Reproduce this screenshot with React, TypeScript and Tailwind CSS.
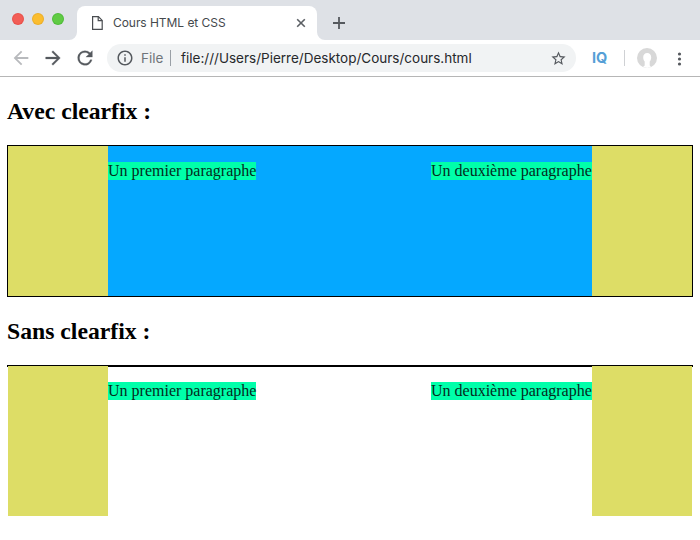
import React from "react";

function PageIcon() {
  return (
    <svg className="ml-[15px] h-[14px] w-[11px] shrink-0" viewBox="0 0 11 14" fill="none" stroke="#4a4d51" strokeWidth="1.2">
      <path d="M0.6 0.6H6.4L10.2 4.4V13.4H0.6Z" />
      <path d="M6.2 0.6V4.6H10.2" />
    </svg>
  );
}

function TabStrip() {
  return (
    <div className="flex h-10 items-end bg-[#dee1e6]">
      <div className="flex h-10 w-[69px] shrink-0 items-start gap-2 pl-3 pt-[13px]">
        <span className="size-3 rounded-full border border-[#e0443e]/50 bg-[#f25d56]" />
        <span className="size-3 rounded-full border border-[#dea123]/50 bg-[#fbbd2f]" />
        <span className="size-3 rounded-full border border-[#3eae2d]/50 bg-[#60cb44]" />
      </div>
      <svg className="size-2 shrink-0" viewBox="0 0 8 8" fill="#fff"><path d="M8 0A8 8 0 0 1 0 8H8Z" /></svg>
      <div className="flex h-[34px] w-[240px] shrink-0 items-center rounded-t-lg bg-white">
        <PageIcon />
        <span className="ml-[10px] w-[183px] whitespace-nowrap text-[12px] leading-4 tracking-[-0.05px] text-[#45494d]">Cours HTML et CSS</span>
        <svg className="size-[10px] shrink-0" viewBox="0 0 10 10" stroke="#5b5f64" strokeWidth="1.6"><path d="M1.2 1.2L8.8 8.8M8.800 1.200L1.200 8.800" /></svg>
      </div>
      <svg className="size-2 shrink-0" viewBox="0 0 8 8" fill="#fff"><path d="M0 0A8 8 0 0 0 8 8H0Z" /></svg>
      <svg className="mb-[11px] ml-2 size-3" viewBox="0 0 12 12" stroke="#55595e" strokeWidth="1.8"><path d="M6 0V12M0 6H12" /></svg>
    </div>
  );
}

function Toolbar() {
  return (
    <div className="flex h-[37px] items-center border-b border-[#b6b6b6] bg-white">
      <svg className="ml-[10px] size-[22px] shrink-0" viewBox="0 0 24 24" fill="#b8babd"><path d="M20 11H7.83l5.59-5.59L12 4l-8 8 8 8 1.41-1.41L7.83 13H20v-2z" /></svg>
      <svg className="ml-[10px] size-[22px] shrink-0" viewBox="0 0 24 24" fill="#55595e" stroke="#55595e" strokeWidth="0.3"><path d="M12 4l-1.41 1.41L16.17 11H4v2h12.17l-5.58 5.59L12 20l8-8z" /></svg>
      <svg className="ml-[10px] size-[22px] shrink-0" viewBox="0 0 24 24" fill="#55595e" stroke="#55595e" strokeWidth="0.3"><path d="M17.65 6.35A7.96 7.96 0 0 0 12 4a8 8 0 1 0 7.73 10h-2.08A6 6 0 1 1 12 6c1.66 0 3.14.69 4.22 1.78L13 11h7V4l-2.35 2.35z" /></svg>
      <div className="ml-[11px] flex h-7 w-[469px] shrink-0 items-center rounded-full bg-[#f1f3f4]">
        <svg className="ml-[9px] size-[18px] shrink-0" viewBox="0 0 24 24" fill="#55595e"><path d="M11 17h2v-6h-2v6zm1-15C6.48 2 2 6.48 2 12s4.480 10 10 10 10-4.480 10-10S17.520 2 12 2zm0 18c-4.410 0-8-3.590-8-8s3.590-8 8-8 8 3.590 8 8-3.590 8-8 8zM11 9h2V7h-2v2z" /></svg>
        <span className="ml-[7px] w-[29px] text-[13.5px] leading-5 text-[#70757a]">File</span>
        <span className="h-4 w-px bg-[#9aa0a6]" />
        <span className="ml-[10px] w-[369px] whitespace-nowrap text-[13.5px] leading-5 text-[#26282b]">file:///Users/Pierre/Desktop/Cours/cours.html</span>
        <svg className="size-[17px] shrink-0" viewBox="0 0 24 24" fill="#55595e"><path d="M22 9.240l-7.190-.62L12 2 9.190 8.630 2 9.240l5.460 4.730L5.820 21 12 17.270 18.180 21l-1.630-7.030L22 9.240zM12 15.400l-3.760 2.270 1-4.280-3.320-2.880 4.380-.38L12 6.100l1.710 4.040 4.380.38-3.320 2.880 1 4.280L12 15.400z" /></svg>
      </div>
      <span className="ml-4 w-[32px] text-[14.5px] leading-4 font-bold text-[#559fd6]">IQ</span>
      <span className="h-4 w-px bg-[#cfd1d4]" />
      <svg className="ml-3 size-5 shrink-0" viewBox="0 0 20 20">
        <circle cx="10" cy="10" r="10" fill="#d8d8d8" />
        <path d="M6.200 9.300C6.200 6.600 7.800 5 10.200 5s4 1.600 4 4.300c0 1.800-.6 3.200-1.500 4.200v4l1.300 1.500-3.800 1-4.200-.9 1.700-1.600v-4c-.9-1-1.500-2.400-1.500-4.200Z" fill="#fff" />
      </svg>
      <svg className="ml-[17px] mt-px h-[14px] w-[10px] shrink-0" viewBox="0 0 10 14" fill="#55595e"><circle cx="5.500" cy="2" r="1.600" /><circle cx="5.500" cy="7" r="1.600" /><circle cx="5.500" cy="12" r="1.600" /></svg>
    </div>
  );
}

function Floats() {
  return (
    <>
      <div className="h-[150px] w-[100px] shrink-0 bg-[#dddd66]" />
      <p className="mt-4 h-[18px] w-[148px] whitespace-nowrap bg-[#00ffaa] text-[16px] leading-[18px] text-[#052b1d]">Un premier paragraphe</p>
      <p className="mt-4 ml-auto h-[18px] w-[161px] whitespace-nowrap bg-[#00ffaa] text-[16px] leading-[18px] text-[#052b1d]">Un deuxième paragraphe</p>
      <div className="h-[150px] w-[100px] shrink-0 bg-[#dddd66]" />
    </>
  );
}

export default function App() {
  return (
    <div className="h-[540px] w-[700px] overflow-hidden bg-white font-['Inter',sans-serif]">
      <TabStrip />
      <Toolbar />
      <main className="px-[7px] pt-5 font-['Liberation_Serif',serif] text-black">
        <h2 className="mb-5 text-[23.7px] leading-7 font-bold">Avec clearfix :</h2>
        <div className="flex h-[152px] items-start border border-black bg-[#05a8ff]"><Floats /></div>
        <h2 className="my-5 text-[23.7px] leading-7 font-bold">Sans clearfix :</h2>
        <div className="flex h-[2px] items-start border border-black"><Floats /></div>
      </main>
    </div>
  );
}
